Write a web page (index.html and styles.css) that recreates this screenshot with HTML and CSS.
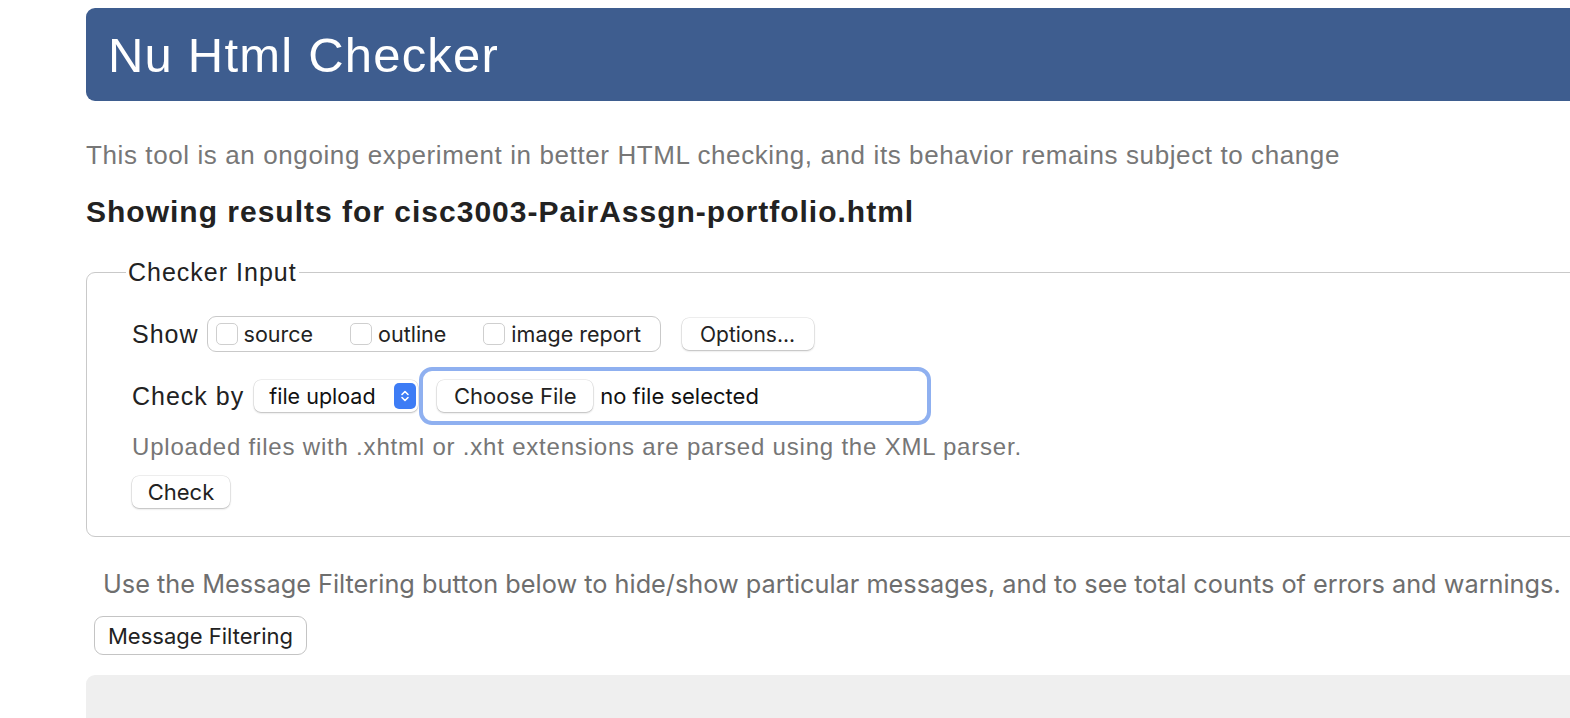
FILE: index.html
```html
<!DOCTYPE html>
<html lang="en">
<head>
<meta charset="utf-8">
<title>Nu Html Checker</title>
<link rel="stylesheet" href="styles.css">
</head>
<body>
<div class="page">
  <header class="banner"><h1 class="title">Nu Html Checker</h1></header>
  <p class="intro">This tool is an ongoing experiment in better HTML checking, and its behavior remains subject to change</p>
  <h2 class="results">Showing results for cisc3003-PairAssgn-portfolio.html</h2>
  <fieldset class="input-box">
    <legend class="legend">Checker Input</legend>
    <div class="row show-row">
      <span class="label">Show</span>
      <div class="check-group">
        <label class="opt"><span class="box"></span>source</label>
        <label class="opt"><span class="box"></span>outline</label>
        <label class="opt"><span class="box"></span>image report</label>
      </div>
      <span class="btn options">Options...</span>
    </div>
    <div class="row by-row">
      <span class="label">Check by</span>
      <span class="select">file upload<span class="stepper"><svg width="10" height="16" viewBox="0 0 10 16"><path d="M2 6.5 L5 3.5 L8 6.5 M2 9.5 L5 12.5 L8 9.5" fill="none" stroke="#fff" stroke-width="1.6" stroke-linecap="round" stroke-linejoin="round"/></svg></span></span>
      <span class="file-ring"><span class="btn choose">Choose File</span><span class="nofile">no file selected</span></span>
    </div>
    <p class="hint">Uploaded files with .xhtml or .xht extensions are parsed using the XML parser.</p>
    <span class="btn check">Check</span>
  </fieldset>
  <p class="filter-note">Use the Message Filtering button below to hide/show particular messages, and to see total counts of errors and warnings.</p>
  <span class="btn filter">Message Filtering</span>
  <div class="results-box"></div>
</div>
</body>
</html>
```
FILE: styles.css
```css
html, body { margin: 0; padding: 0; background: #fff; overflow: hidden; }
body { width: 1570px; height: 718px; }
.page { padding-left: 86px; width: 1600px; padding-top: 8px; font-family: "Liberation Sans", Arial, sans-serif; }
.banner { background: #3e5d8f; height: 93px; border-radius: 9px 0 0 9px; display: flex; align-items: center; padding-left: 22px; }
.title { margin: 0; color: #fff; font-weight: normal; font-size: 49px; letter-spacing: 1.2px; line-height: 56px; }
.intro { margin: 39px 0 0; color: #777; font-size: 26px; letter-spacing: 0.6px; line-height: 30px; }
.results { margin: 24px 0 0; color: #222; font-size: 30px; font-weight: bold; letter-spacing: 1px; line-height: 36px; }
.input-box { margin: 27px 0 0; border: 1.5px solid #c9c9c9; border-radius: 9px; padding: 29px 0 28px 45px; width: 1600px; box-sizing: border-box; }
.legend { font-size: 25px; line-height: 30px; color: #222; padding: 0 2px; margin-left: -6px; letter-spacing: 1px; }
.row { display: flex; align-items: center; }
.label { font-size: 25px; color: #222; letter-spacing: 1px; }
.show-row { height: 36px; }
.check-group { margin-left: 8px; height: 36px; box-sizing: border-box; border: 1.5px solid #c9c9c9; border-radius: 9px; display: flex; align-items: center; padding: 0 0 0 8px; width: 454px; font-family: Inter, "Noto Sans", sans-serif; }
.opt { display: flex; align-items: center; font-size: 21.5px; color: #222; margin-right: 37px; }
.opt:last-child { margin-right: 0; }
.box { width: 22px; height: 22px; border: 1px solid #cfcfcf; border-radius: 5px; box-sizing: border-box; margin-right: 6px; background: #fff; }
.btn { display: inline-flex; align-items: center; justify-content: center; background: #fff; border-radius: 7px; box-shadow: 0 0 0 0.5px rgba(0,0,0,0.12), 0 1px 2px rgba(0,0,0,0.22); font-family: Inter, "Noto Sans", sans-serif; font-size: 22px; color: #222; box-sizing: border-box; }
.options { margin-left: 21px; width: 132px; height: 32px; font-size: 21px; }
.by-row { margin-top: 15px; height: 58px; }
.select { margin-left: 10px; display: inline-flex; align-items: center; height: 32px; width: 164px; box-sizing: border-box; padding-left: 15px; border-radius: 7px; background: #fff; box-shadow: 0 0 0 0.5px rgba(0,0,0,0.12), 0 1px 2px rgba(0,0,0,0.22); font-family: Inter, "Noto Sans", sans-serif; font-size: 21.5px; color: #111; justify-content: space-between; padding-right: 2px; }
.stepper { width: 22px; height: 26px; border-radius: 5px; background: #3d7cf5; display: flex; align-items: center; justify-content: center; }
.file-ring { margin-left: 1px; display: flex; align-items: center; width: 512px; height: 58px; box-sizing: border-box; border: 4px solid #8fb0f0; border-radius: 13px; padding-left: 14px; flex-shrink: 0; }
.choose { width: 156px; height: 32px; }
.nofile { margin-left: 7px; font-family: Inter, "Noto Sans", sans-serif; font-size: 22px; color: #111; }
.hint { margin: 7px 0 0; color: #767676; font-size: 24px; letter-spacing: 0.8px; line-height: 30px; }
.check { margin-top: 14px; width: 98px; height: 32px; }
.filter-note { margin: 32px 0 0 17px; color: #6e6e6e; font-family: Inter, "Noto Sans", sans-serif; font-size: 25.3px; line-height: 30px; white-space: nowrap; }
.filter { margin: 17px 0 0 8px; width: 213px; height: 39px; box-shadow: none; border: 1.5px solid #c4c4c4; border-radius: 9px; }
.results-box { margin-top: 20px; height: 60px; background: #efefef; border-radius: 9px 0 0 0; }
```
